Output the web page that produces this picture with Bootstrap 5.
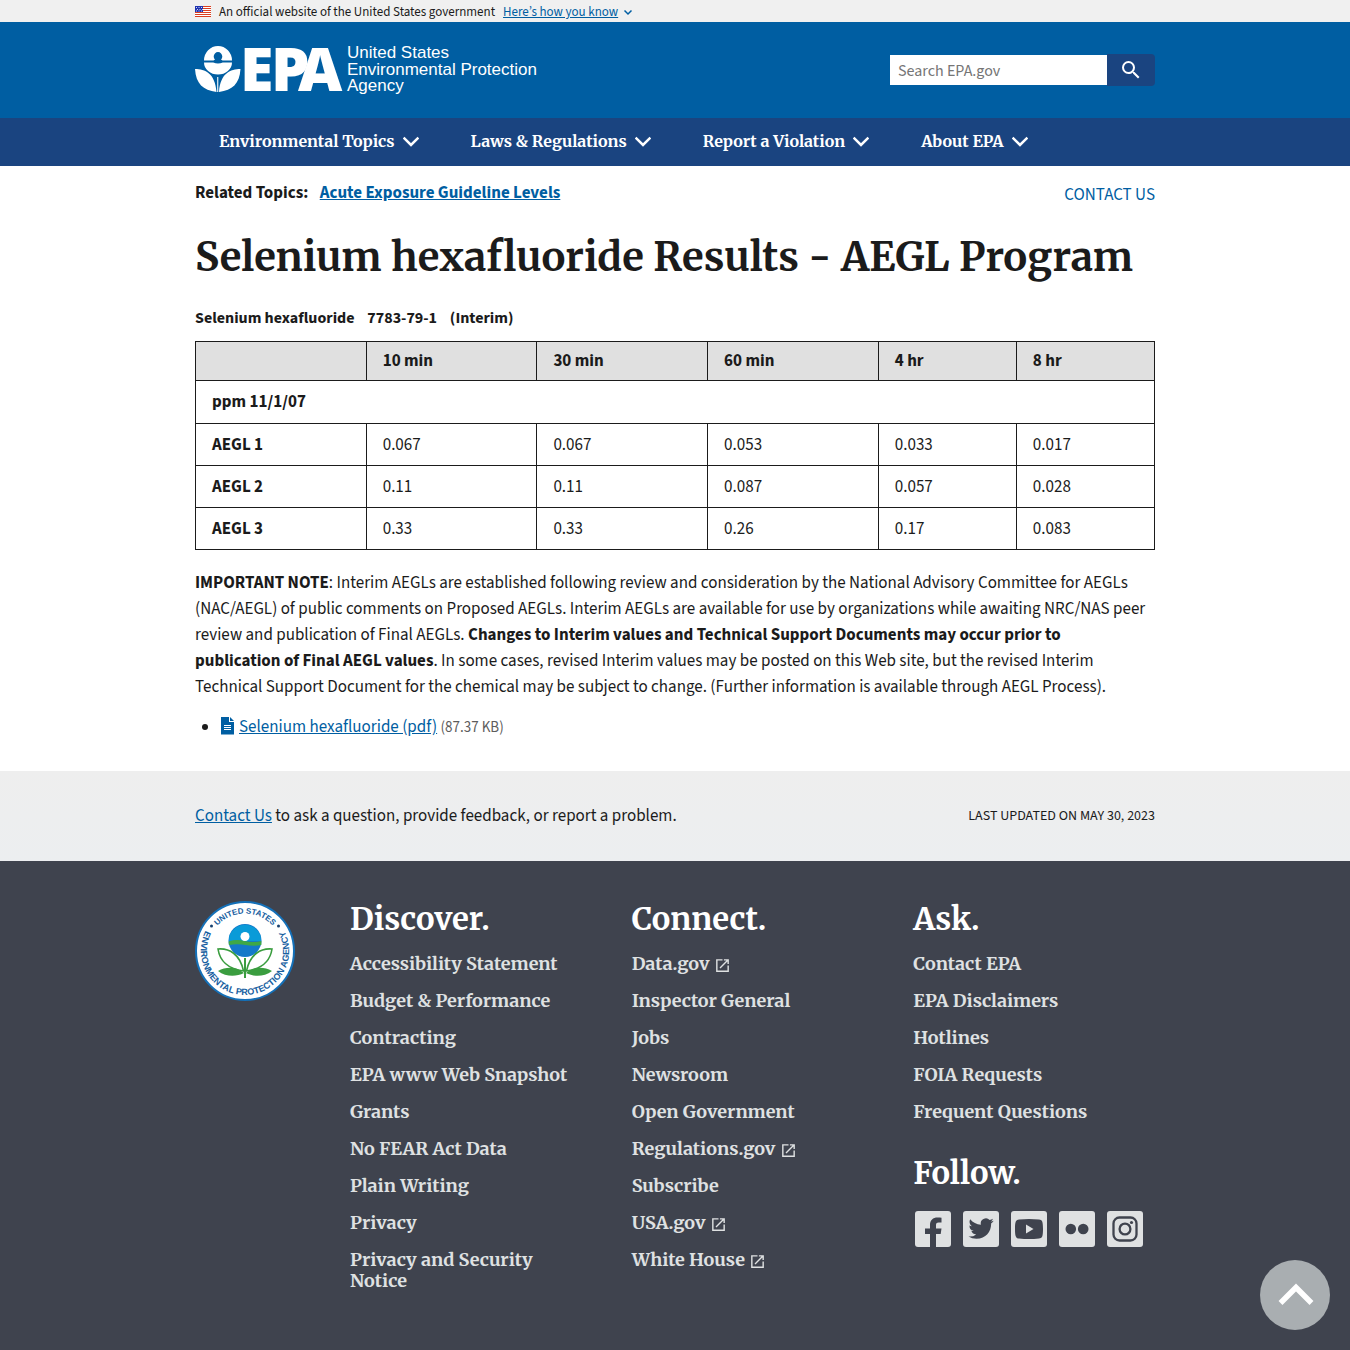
<!DOCTYPE html>
<html lang="en">
<head>
<meta charset="utf-8">
<meta name="viewport" content="width=device-width, initial-scale=1">
<title>Selenium hexafluoride Results - AEGL Program | US EPA</title>
<link href="https://cdn.jsdelivr.net/npm/bootstrap@5.3.0/dist/css/bootstrap.min.css" rel="stylesheet">
<script src="https://cdn.jsdelivr.net/npm/bootstrap@5.3.0/dist/js/bootstrap.bundle.min.js" defer></script>
<style>
:root{--serif:"Merriweather","DejaVu Serif Condensed",serif}
body{font-family:"Source Sans 3","Open Sans",sans-serif;font-size:17px;line-height:25px;color:#1b1b1b;background:#fff}
a{color:#005ea2}
svg{display:block;flex:none}
.wrap{max-width:1024px;padding:0 32px;margin:0 auto}
.gov-banner{background:#f0f0f0;font-size:13px;line-height:20px;padding-top:2px}
.masthead{background:#005ea2}
.masthead .wrap{min-height:96px}
.epa-logo{overflow:visible}
.search-box{width:265px;height:32px}
.search-box input{height:30px;border:0;border-radius:0;padding:2px 8px 0;font-size:16px;color:#1b1b1b}
.search-box input::placeholder{color:#757575}
.search-box button{width:48px;height:32px;background:#1a4480;border:0;border-radius:0 4px 4px 0}
.topnav{background:#1a4480}
.topnav button{background:none;border:0;color:#fff;font:700 16px/46px var(--serif);padding:0 24px 2px}
.related{padding-top:15px;line-height:24px}
.contact-link{padding-top:2px}
.page-title{font:700 40px/48px var(--serif);margin:26px 0 27px}
.aegl{border-color:#1b1b1b;margin-bottom:20px;color:#1b1b1b}
.aegl caption{caption-side:top;padding:0 0 13px;font-weight:700;font-size:16px;line-height:20px;color:#1b1b1b}
.aegl th,.aegl td{border:1px solid #1b1b1b;padding:9px 16px 7px;line-height:25px;color:#1b1b1b}
.aegl thead th{background:#e0e0e0;padding:7px 16px 6px}
.aegl tbody tr:first-child th{padding-bottom:8px}
.note{line-height:26px;padding-right:8px;margin-bottom:0}
.filelist{margin:15px 0 31px;padding-left:25px}
.filelist li::marker{color:#1b1b1b}
.filelist svg{display:inline-block;vertical-align:-3px}
.filesize{font-size:15px;line-height:20px;color:#5c5c5c}
.feedback{background:linear-gradient(#eee,#eceef0)}
.feedback .wrap{min-height:90px}
.updated{font-size:14px}
.sitefoot{background:#3f434e;padding:40px 0 58px}
.seal-col{width:155px}
.foot-cols{display:grid;grid-template-columns:repeat(3,1fr);column-gap:40px}
.foot-cols h2{font:700 31px/36px var(--serif);color:#fff;margin-bottom:16px}
.foot-cols ul{display:flex;flex-direction:column;gap:16px;margin-bottom:33px}
.foot-cols li,.foot-cols li a{font:700 18px/21px var(--serif);color:#dfe1e2;text-decoration:none}
.foot-cols li svg{display:inline-block;vertical-align:-4px}
.social{padding:4px 0 0 2px}
.to-top{position:fixed;right:20px;bottom:20px;width:70px;height:70px;background:#a9aeb1}
</style>
</head>
<body>
<svg width="0" height="0" class="position-absolute" aria-hidden="true">
<symbol id="chev" viewBox="1 1 14 14"><path d="M1.500 5 8 11.500 14.500 5" fill="none" stroke="currentColor" stroke-width="2.200"/></symbol>
<symbol id="ext" viewBox="0 0 24 24"><path fill="currentColor" d="M19 19H5V5h7V3H3v18h18v-9h-2v7zM14 3v2h3.600l-9.800 9.800 1.400 1.400L19 6.400V10h2V3h-7z"/></symbol>
</svg>

<div class="gov-banner"><div class="wrap d-flex align-items-center">
<svg class="me-2" width="16" height="12" viewBox="0 0 16 12"><path fill="#fff" d="M0 0h16v11H0z"/><path stroke="#db3e1f" d="M0 .5h16M0 2.500h16M0 4.500h16M0 6.500h16M0 8.500h16M0 10.500h16"/><path fill="#1e33b1" d="M0 0h8v6H0z"/><path stroke="#fff" stroke-dasharray="1 1.500" d="M1 1.500h7M2 3.500h6M1 5h7" stroke-width=".8"/></svg>
<span class="me-2">An official website of the United States government</span>
<a href="#">Here’s how you know</a>
<svg class="ms-1" width="12" height="12" viewBox="0 0 12 12"><path d="M2.500 4.500 6 8l3.500-3.500" fill="none" stroke="#005ea2" stroke-width="1.500"/></svg>
</div></div>

<header>
<div class="masthead"><div class="wrap d-flex align-items-center justify-content-between">
<a href="#" aria-label="EPA home"><svg class="epa-logo" width="350" height="52" viewBox="0 0 350 52" fill="#fff">
<path d="M9 16.500a14 14.500 0 0 1 28 0h-9.500l-1.500-1a4.300 4.300 0 1 0-6 0l-1.500 1z"/>
<path d="M9 18.500h9.200q4.800 2 9.600 0H37a14 12 0 0 1-28 0z"/>
<path d="M0 25c10 0 20 4 21.500 23C8 46 1 40 0 25zM45.500 25c-10 0-20 4-21.500 23 13.500-2 20.500-8 21.500-23z"/>
<path d="M22.200 33h1.100v15h-1.100z"/>
<text y="47" x="45 76 103" font-family="Open Sans, sans-serif" font-weight="800" font-size="61">EPA</text>
<g font-family="Liberation Sans, sans-serif" font-size="17"><text x="152" y="14">United States</text><text x="152" y="31">Environmental Protection</text><text x="152" y="47">Agency</text></g>
</svg></a>
<form class="search-box d-flex align-items-center" role="search">
<input class="form-control shadow-none" type="search" aria-label="Search EPA.gov" placeholder="Search EPA.gov">
<button type="button" class="d-flex align-items-center justify-content-center flex-shrink-0" aria-label="Search"><svg width="24" height="24" viewBox="0 0 24 24"><path fill="#fff" d="M15.500 14h-.79l-.28-.27A6.470 6.470 0 0 0 16 9.500 6.500 6.500 0 1 0 9.500 16c1.610 0 3.090-.59 4.230-1.570l.27.280v.79l5 4.990L20.490 19l-4.990-5zm-6 0C7.010 14 5 11.990 5 9.500S7.010 5 9.500 5 14 7.010 14 9.500 11.990 14 9.500 14z"/></svg></button>
</form>
</div></div>
<nav class="topnav" aria-label="Main"><div class="wrap d-flex flex-wrap gap-1">
<button type="button" class="d-flex align-items-center gap-2">Environmental Topics<svg width="16" height="16"><use href="#chev"/></svg></button>
<button type="button" class="d-flex align-items-center gap-2">Laws &amp; Regulations<svg width="16" height="16"><use href="#chev"/></svg></button>
<button type="button" class="d-flex align-items-center gap-2">Report a Violation<svg width="16" height="16"><use href="#chev"/></svg></button>
<button type="button" class="d-flex align-items-center gap-2">About EPA<svg width="16" height="16"><use href="#chev"/></svg></button>
</div></nav>
</header>

<main class="wrap">
<div class="related d-flex justify-content-between">
<div class="fw-bold">Related Topics: <a class="ms-2" href="#">Acute Exposure Guideline Levels</a></div>
<a class="contact-link text-decoration-none" href="#">CONTACT US</a>
</div>
<h1 class="page-title">Selenium hexafluoride Results - AEGL Program</h1>
<table class="table aegl">
<caption>Selenium hexafluoride &nbsp;&nbsp; 7783-79-1 &nbsp;&nbsp; (Interim)</caption>
<colgroup><col style="width:17.8%"><col style="width:17.8%"><col style="width:17.8%"><col style="width:17.8%"><col style="width:14.400%"><col style="width:14.400%"></colgroup>
<thead><tr><th></th><th scope="col">10 min</th><th scope="col">30 min</th><th scope="col">60 min</th><th scope="col">4 hr</th><th scope="col">8 hr</th></tr></thead>
<tbody>
<tr><th colspan="6" scope="rowgroup">ppm 11/1/07</th></tr>
<tr><th scope="row">AEGL 1</th><td>0.067</td><td>0.067</td><td>0.053</td><td>0.033</td><td>0.017</td></tr>
<tr><th scope="row">AEGL 2</th><td>0.11</td><td>0.11</td><td>0.087</td><td>0.057</td><td>0.028</td></tr>
<tr><th scope="row">AEGL 3</th><td>0.33</td><td>0.33</td><td>0.26</td><td>0.17</td><td>0.083</td></tr>
</tbody>
</table>
<p class="note"><strong>IMPORTANT NOTE</strong>: Interim AEGLs are established following review and consideration by the National Advisory Committee for AEGLs (NAC/AEGL) of public comments on Proposed AEGLs. Interim AEGLs are available for use by organizations while awaiting NRC/NAS peer review and publication of Final AEGLs. <strong>Changes to Interim values and Technical Support Documents may occur prior to publication of Final AEGL values</strong>. In some cases, revised Interim values may be posted on this Web site, but the revised Interim Technical Support Document for the chemical may be subject to change. (Further information is available through AEGL Process).</p>
<ul class="filelist"><li><svg class="me-1" width="15" height="18" viewBox="0 0 15 18"><path fill="#005ea2" d="M1 0h8v5h5v12.500H1zM10 0l4 4h-4z"/><path stroke="#fff" d="M4 8.500h7M4 10.500h7M4 12.500h7"/></svg><a href="#">Selenium hexafluoride (pdf)</a> <span class="filesize">(87.37 KB)</span></li></ul>
</main>

<footer>
<div class="feedback"><div class="wrap d-flex align-items-center justify-content-between">
<div><a href="#">Contact Us</a> to ask a question, provide feedback, or report a problem.</div>
<div class="updated">LAST UPDATED ON MAY 30, 2023</div>
</div></div>
<div class="sitefoot"><div class="wrap d-flex">
<div class="seal-col flex-shrink-0">
<svg width="100" height="100" viewBox="0 0 100 100" role="img" aria-label="EPA seal">
<circle cx="50" cy="50" r="49" fill="#fff" stroke="#1470b8" stroke-width="2"/>
<path id="arcTop" d="M12.500 50a37.500 37.500 0 0 1 75 0" fill="none"/>
<path id="arcLow" d="M10 31a44.200 44.200 0 1 0 80 0" fill="none"/>
<g fill="#17609f" font-family="Liberation Sans, sans-serif" font-weight="700" text-anchor="middle">
<text font-size="8"><textPath href="#arcTop" startOffset="50%">UNITED STATES</textPath></text>
<text font-size="9"><textPath href="#arcLow" startOffset="50%">ENVIRONMENTAL PROTECTION AGENCY</textPath></text></g>
<circle cx="16.500" cy="25" r="1.500" fill="#17406f"/><circle cx="83.500" cy="25" r="1.500" fill="#17406f"/>
<circle cx="50" cy="39.500" r="16.500" fill="#1479c9"/>
<path fill="#0a9bd8" d="M34.500 34.500a16.500 16.500 0 0 1 31 0L66 40H34z"/>
<path fill="#3fa845" d="M33.600 40.500q8-2.500 16-.5t16.800 0v4q-8 1.500-16 0t-16.500 0z"/>
<circle cx="50" cy="35.500" r="4.500" fill="#fff"/>
<g fill="#fff" stroke="#3a9d3f" stroke-width="1.600"><path d="M23 48c11-1 22 5 25.500 22C34 68 25 61 23 48zM77 48c-11-1-22 5-25.500 22C66 68 75 61 77 48z"/></g>
<path fill="#3a9d3f" d="M23 70c9-5 19-4 26 2-8 4-18 4-26-2zM77 70c-9-5-19-4-26 2 8 4 18 4 26-2zM49 57h2v20h-2z"/>
</svg>
</div>
<div class="foot-cols flex-grow-1">
<section><h2>Discover.</h2><ul class="list-unstyled">
<li><a href="#">Accessibility Statement</a></li><li><a href="#">Budget &amp; Performance</a></li><li><a href="#">Contracting</a></li><li><a href="#">EPA www Web Snapshot</a></li><li><a href="#">Grants</a></li><li><a href="#">No FEAR Act Data</a></li><li><a href="#">Plain Writing</a></li><li><a href="#">Privacy</a></li><li><a href="#">Privacy and Security Notice</a></li></ul></section>
<section><h2>Connect.</h2><ul class="list-unstyled">
<li><a href="#">Data.gov <svg width="17" height="17"><use href="#ext"/></svg></a></li><li><a href="#">Inspector General</a></li><li><a href="#">Jobs</a></li><li><a href="#">Newsroom</a></li><li><a href="#">Open Government</a></li><li><a href="#">Regulations.gov <svg width="17" height="17"><use href="#ext"/></svg></a></li><li><a href="#">Subscribe</a></li><li><a href="#">USA.gov <svg width="17" height="17"><use href="#ext"/></svg></a></li><li><a href="#">White House <svg width="17" height="17"><use href="#ext"/></svg></a></li></ul></section>
<section><h2>Ask.</h2><ul class="list-unstyled">
<li><a href="#">Contact EPA</a></li><li><a href="#">EPA Disclaimers</a></li><li><a href="#">Hotlines</a></li><li><a href="#">FOIA Requests</a></li><li><a href="#">Frequent Questions</a></li></ul>
<h2>Follow.</h2>
<div class="social d-flex">
<a class="me-2 pe-1" href="#" aria-label="Facebook"><svg width="36" height="36" viewBox="0 0 36 36"><rect width="36" height="36" rx="3" fill="#dfe1e2"/><path fill="#3f434e" d="M15 36V23h-5v-5.500h5V14c0-5 3-7.500 7.500-7.500 1.500 0 3 .1 4 .3v4.700h-2.800c-2.200 0-2.700 1-2.700 2.700v3.300h5.500L25.700 23H21v13z"/></svg></a>
<a class="me-2 pe-1" href="#" aria-label="Twitter"><svg width="36" height="36" viewBox="0 0 36 36"><rect width="36" height="36" rx="3" fill="#dfe1e2"/><path fill="#3f434e" transform="translate(5.500 5) scale(1.050)" d="M23.950 4.570a10 10 0 0 1-2.820.770 4.960 4.960 0 0 0 2.160-2.720c-.95.550-2 .950-3.130 1.180a4.920 4.920 0 0 0-8.380 4.480C7.690 8.100 4.070 6.130 1.640 3.160a4.920 4.920 0 0 0 1.520 6.570 4.900 4.900 0 0 1-2.230-.61v.06a4.920 4.920 0 0 0 3.950 4.830 5 5 0 0 1-2.210.080 4.940 4.940 0 0 0 4.600 3.420A9.870 9.870 0 0 1 0 19.540a14 14 0 0 0 7.550 2.210c9.050 0 14-7.500 14-13.980 0-.21 0-.42-.02-.63a9.940 9.940 0 0 0 2.460-2.550z"/></svg></a>
<a class="me-2 pe-1" href="#" aria-label="YouTube"><svg width="36" height="36" viewBox="0 0 36 36"><rect width="36" height="36" rx="3" fill="#dfe1e2"/><path fill="#3f434e" d="M8 8.500q10-1 20 0c3 .3 4 1.500 4 9.500s-1 9.200-4 9.500q-10 1-20 0c-3-.3-4-1.500-4-9.500s1-9.200 4-9.500z"/><path fill="#dfe1e2" d="M15 13.500v9l7.500-4.500z"/></svg></a>
<a class="me-2 pe-1" href="#" aria-label="Flickr"><svg width="36" height="36" viewBox="0 0 36 36"><rect width="36" height="36" rx="3" fill="#dfe1e2"/><circle cx="11.800" cy="18" r="5.300" fill="#3f434e"/><circle cx="24.200" cy="18" r="5.300" fill="#3f434e"/></svg></a>
<a href="#" aria-label="Instagram"><svg width="36" height="36" viewBox="0 0 36 36"><rect width="36" height="36" rx="3" fill="#dfe1e2"/><g fill="none" stroke="#3f434e" stroke-width="2.300"><rect x="6.500" y="6.500" width="23" height="23" rx="6"/><circle cx="18" cy="18" r="5.400"/></g><circle cx="24.500" cy="11.500" r="1.600" fill="#3f434e"/></svg></a>
</div></section>
</div>
</div></div>
</footer>
<a class="to-top rounded-circle d-flex align-items-center justify-content-center" href="#" aria-label="Back to top"><svg width="40" height="40" viewBox="0 0 40 40"><path d="M5.500 28 21 12.500 36.500 28" fill="none" stroke="#fff" stroke-width="5.500"/></svg></a>
</body>
</html>
